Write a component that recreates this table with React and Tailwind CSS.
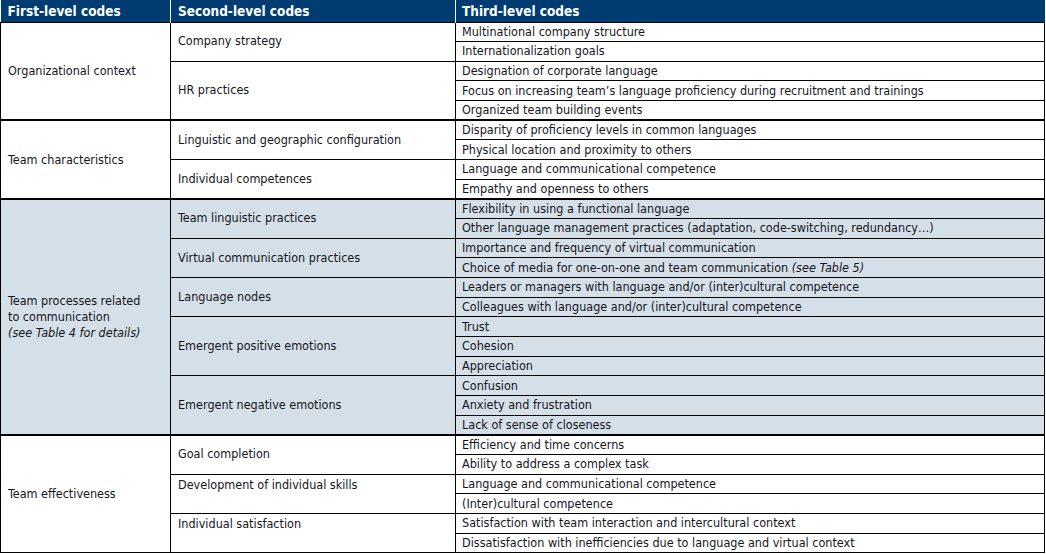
import React from 'react'

const sections = [
  {
    first: ['Organizational context'],
    shaded: false,
    groups: [
      { name: 'Company strategy', items: ['Multinational company structure', 'Internationalization goals'] },
      {
        name: 'HR practices',
        items: [
          'Designation of corporate language',
          'Focus on increasing team’s language proficiency during recruitment and trainings',
          'Organized team building events',
        ],
      },
    ],
  },
  {
    first: ['Team characteristics'],
    shaded: false,
    groups: [
      {
        name: 'Linguistic and geographic configuration',
        items: ['Disparity of proficiency levels in common languages', 'Physical location and proximity to others'],
      },
      {
        name: 'Individual competences',
        items: ['Language and communicational competence', 'Empathy and openness to others'],
      },
    ],
  },
  {
    first: ['Team processes related', 'to communication'],
    note: '(see Table 4 for details)',
    shaded: true,
    groups: [
      {
        name: 'Team linguistic practices',
        items: [
          'Flexibility in using a functional language',
          'Other language management practices (adaptation, code-switching, redundancy…)',
        ],
      },
      {
        name: 'Virtual communication practices',
        items: [
          'Importance and frequency of virtual communication',
          ['Choice of media for one-on-one and team communication ', '(see Table 5)'],
        ],
      },
      {
        name: 'Language nodes',
        items: [
          'Leaders or managers with language and/or (inter)cultural competence',
          'Colleagues with language and/or (inter)cultural competence',
        ],
      },
      { name: 'Emergent positive emotions', items: ['Trust', 'Cohesion', 'Appreciation'] },
      {
        name: 'Emergent negative emotions',
        items: ['Confusion', 'Anxiety and frustration', 'Lack of sense of closeness'],
      },
    ],
  },
  {
    first: ['Team effectiveness'],
    shaded: false,
    groups: [
      { name: 'Goal completion', items: ['Efficiency and time concerns', 'Ability to address a complex task'] },
      {
        name: 'Development of individual skills',
        top: true,
        items: ['Language and communicational competence', '(Inter)cultural competence'],
      },
      {
        name: 'Individual satisfaction',
        top: true,
        items: [
          'Satisfaction with team interaction and intercultural context',
          'Dissatisfaction with inefficiencies due to language and virtual context',
        ],
      },
    ],
  },
]

function Item({ value }) {
  if (Array.isArray(value)) {
    return (
      <>
        {value[0]}
        <i>{value[1]}</i>
      </>
    )
  }
  return value
}

export default function App() {
  const rows = []
  sections.forEach((s, si) => {
    const total = s.groups.reduce((n, g) => n + g.items.length, 0)
    const bg = s.shaded ? 'bg-[#d5dfe8]' : 'bg-white'
    s.groups.forEach((g, gi) => {
      g.items.forEach((it, ii) => {
        const firstOfSection = gi === 0 && ii === 0
        rows.push(
          <tr key={`${si}-${gi}-${ii}`} className={`h-[19.67px] ${bg} ${firstOfSection && si > 0 ? 'border-t-2 border-black' : ''}`}>
            {firstOfSection && (
              <td rowSpan={total} className="border border-black px-[7px] align-middle leading-[16px]">
                {s.first.map((line, li) => (
                  <div key={li}>{line}</div>
                ))}
                {s.note && <i className="block">{s.note}</i>}
              </td>
            )}
            {ii === 0 && (
              <td
                rowSpan={g.items.length}
                className={`border border-black px-[7px] ${g.top ? 'align-top pt-[1px]' : 'align-middle'}`}
              >
                {g.name}
              </td>
            )}
            <td className="border border-black px-[6px] py-0 leading-[18px]">
              <Item value={it} />
            </td>
          </tr>
        )
      })
    })
  })

  return (
    <div className="w-[1046px] h-[554px] bg-white overflow-hidden">
      <table
        className="w-[1045px] border-collapse table-fixed text-[12.5px] text-[#15151c]"
        style={{ fontFamily: '"Liberation Sans Narrow", "DejaVu Sans Condensed", Roboto, sans-serif' }}
      >
        <colgroup>
          <col className="w-[170px]" />
          <col className="w-[285px]" />
          <col />
        </colgroup>
        <thead>
          <tr className="h-[22px] bg-[#003c71] text-white text-[13.5px] font-bold text-left">
            <th className="px-[7px] border-r border-white">First-level codes</th>
            <th className="px-[7px] border-r border-white">Second-level codes</th>
            <th className="px-[6px]">Third-level codes</th>
          </tr>
        </thead>
        <tbody>{rows}</tbody>
      </table>
    </div>
  )
}
